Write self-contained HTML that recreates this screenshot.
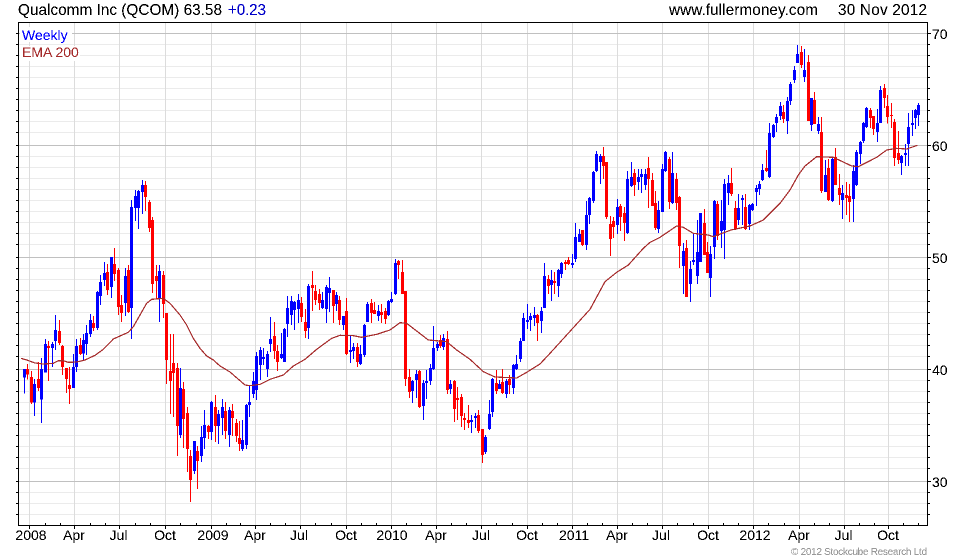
<!DOCTYPE html>
<html><head><meta charset="utf-8"><title>Qualcomm Inc (QCOM)</title>
<style>
html,body{margin:0;padding:0;background:#fff;width:980px;height:560px;overflow:hidden}
svg{display:block}
text{font-family:"Liberation Sans",Arial,sans-serif}
.bw,.bb,.rw,.rb{fill:none;shape-rendering:crispEdges}
.bw{stroke:#0000ff;stroke-width:3}.bb{stroke:#0000ff;stroke-width:9}
.rw{stroke:#ff0000;stroke-width:3}.rb{stroke:#ff0000;stroke-width:9}
.ma{fill:none;stroke:#a52a2a;stroke-width:3.6;shape-rendering:crispEdges}
</style></head><body>
<svg xmlns="http://www.w3.org/2000/svg" width="980" height="560" viewBox="0 0 980 560">
<defs><filter id="al" x="0" y="0" width="100%" height="100%" color-interpolation-filters="sRGB"><feComponentTransfer><feFuncA type="discrete" tableValues="0 0 1 1 1"/></feComponentTransfer></filter></defs>
<rect width="980" height="560" fill="#fff"/>
<!-- minor horizontal grid -->
<path shape-rendering="crispEdges" stroke="#ebebeb" fill="none" d="M19 44.5H927M19 55.5H927M19 66.5H927M19 77.5H927M19 88.5H927M19 99.5H927M19 110.5H927M19 121.5H927M19 132.5H927M19 156.5H927M19 167.5H927M19 178.5H927M19 189.5H927M19 200.5H927M19 211.5H927M19 222.5H927M19 233.5H927M19 244.5H927M19 268.5H927M19 279.5H927M19 290.5H927M19 301.5H927M19 312.5H927M19 323.5H927M19 334.5H927M19 345.5H927M19 356.5H927M19 380.5H927M19 391.5H927M19 402.5H927M19 413.5H927M19 424.5H927M19 435.5H927M19 446.5H927M19 457.5H927M19 468.5H927M19 492.5H927M19 503.5H927M19 514.5H927"/>
<!-- vertical grid -->
<path shape-rendering="crispEdges" stroke="#dcdcdc" fill="none" d="M29.5 23V525M74.5 23V525M119.5 23V525M165.5 23V525M211.5 23V525M255.5 23V525M300.5 23V525M346.5 23V525M391.5 23V525M436.5 23V525M481.5 23V525M527.5 23V525M572.5 23V525M617.5 23V525M662.5 23V525M708.5 23V525M753.5 23V525M799.5 23V525M844.5 23V525M888.5 23V525"/>
<!-- major horizontal grid -->
<path shape-rendering="crispEdges" stroke="#c0c0c0" fill="none" d="M19 33.5H927M19 145.5H927M19 257.5H927M19 369.5H927M19 481.5H927"/>
<!-- legend backing -->
<rect x="20" y="27" width="52" height="15" fill="#fff"/>
<rect x="20" y="46" width="60" height="15" fill="#fff"/>
<!-- ticks -->
<path shape-rendering="crispEdges" stroke="#000" fill="none" d="M16 33.5H19M16 44.5H19M16 55.5H19M16 66.5H19M16 77.5H19M16 88.5H19M16 99.5H19M16 110.5H19M16 121.5H19M16 132.5H19M16 145.5H19M16 156.5H19M16 167.5H19M16 178.5H19M16 189.5H19M16 200.5H19M16 211.5H19M16 222.5H19M16 233.5H19M16 244.5H19M16 257.5H19M16 268.5H19M16 279.5H19M16 290.5H19M16 301.5H19M16 312.5H19M16 323.5H19M16 334.5H19M16 345.5H19M16 356.5H19M16 369.5H19M16 380.5H19M16 391.5H19M16 402.5H19M16 413.5H19M16 424.5H19M16 435.5H19M16 446.5H19M16 457.5H19M16 468.5H19M16 481.5H19M16 492.5H19M16 503.5H19M16 514.5H19
M927 33.5H931M927 44.5H930M927 55.5H930M927 66.5H930M927 77.5H930M927 88.5H930M927 99.5H930M927 110.5H930M927 121.5H930M927 132.5H930M927 145.5H931M927 156.5H930M927 167.5H930M927 178.5H930M927 189.5H930M927 200.5H930M927 211.5H930M927 222.5H930M927 233.5H930M927 244.5H930M927 257.5H931M927 268.5H930M927 279.5H930M927 290.5H930M927 301.5H930M927 312.5H930M927 323.5H930M927 334.5H930M927 345.5H930M927 356.5H930M927 369.5H931M927 380.5H930M927 391.5H930M927 402.5H930M927 413.5H930M927 424.5H930M927 435.5H930M927 446.5H930M927 457.5H930M927 468.5H930M927 481.5H931M927 492.5H930M927 503.5H930M927 514.5H930
M29.5 525V529M74.5 525V529M119.5 525V529M165.5 525V529M211.5 525V529M255.5 525V529M300.5 525V529M346.5 525V529M391.5 525V529M436.5 525V529M481.5 525V529M527.5 525V529M572.5 525V529M617.5 525V529M662.5 525V529M708.5 525V529M753.5 525V529M799.5 525V529M844.5 525V529M888.5 525V529
M45.5 523V525M60.5 523V525M90.5 523V525M105.5 523V525M135.5 523V525M150.5 523V525M180.5 523V525M196.5 523V525M226.5 523V525M240.5 523V525M270.5 523V525M285.5 523V525M315.5 523V525M331.5 523V525M361.5 523V525M376.5 523V525M406.5 523V525M421.5 523V525M451.5 523V525M466.5 523V525M496.5 523V525M512.5 523V525M542.5 523V525M557.5 523V525M587.5 523V525M602.5 523V525M632.5 523V525M647.5 523V525M677.5 523V525M693.5 523V525M723.5 523V525M738.5 523V525M768.5 523V525M784.5 523V525M814.5 523V525M829.5 523V525M859.5 523V525M874.5 523V525M903.5 523V525M918.5 523V525"/>

<!-- candles group 1 -->
<g transform="translate(.1667,170) scale(.33333)">
<path class="bw" d="M73 597V671M103 627V738M124 564V759M136 507V608M157 516V591M166 435V540M220 552V654M229 507V606M250 492V573M259 465V555M271 432V501M292 363V480M301 315V405M313 276V348M334 261V384M376 294V438M394 90V507M406 60V153M415 60V177M427 30V132M478 285V456M541 594V804M583 813V912M604 768V876M613 720V837M634 693V810M655 720V822M667 687V795M688 711V831M727 750V843M739 702V837M748 648V741"/>
<path class="bb" d="M73 597V623M103 642V698M124 597V689M136 522V608M157 522V534M166 480V513M220 591V654M229 528V591M250 510V550M259 489V522M271 450V492M292 366V474M301 336V378M313 309V330M334 261V351M376 318V399M394 111V414M406 78V114M415 63V114M427 45V66M478 303V384M541 654V795M583 813V903M604 801V858M613 765V804M634 696V786M655 732V768M667 711V744M688 720V795M727 810V837M739 705V825M748 696V705"/>
<path class="rw" d="M82 582V628M94 603V702M115 576V663M145 513V633M178 450V525M187 525V615M199 594V669M208 591V702M241 504V555M280 438V483M322 282V375M343 234V333M355 294V435M364 375V456M385 285V429M436 33V123M448 90V186M457 141V369M469 285V387M490 303V444M499 429V642M511 492V732M520 492V741M532 579V858M550 636V834M562 711V906M571 840V996M592 828V957M625 765V807M646 675V816M676 696V807M697 702V798M709 747V816M718 753V843"/>
<path class="rb" d="M82 597V614M94 621V698M115 627V654M145 528V534M178 483V519M187 528V591M199 594V627M208 645V657M241 525V552M280 459V474M322 306V360M343 282V312M355 300V411M364 405V429M385 300V426M436 45V81M448 96V174M457 150V342M469 318V333M490 315V402M499 429V570M511 603V633M520 579V609M532 594V768M550 657V747M562 729V837M571 858V930M592 843V873M625 768V786M646 711V768M676 723V783M697 723V744M709 759V798M718 804V822"/>
</g>
<!-- candles group 2 -->
<g transform="translate(250.1667,240) scale(.33333)">
<path class="bw" d="M10 396V474M19 336V480M31 321V420M40 324V375M52 333V411M61 231V336M94 279V357M103 264V366M112 168V291M124 168V255M133 183V270M145 162V249M175 132V297M217 156V207M229 135V249M238 111V216M259 156V213M280 228V270M301 285V369M310 309V357M331 315V375M343 252V351M352 186V246M385 195V243M415 180V228M424 156V189M436 57V165M487 420V489M499 390V474M520 420V540M529 390V477M541 372V435M550 258V390M562 306V333M580 282V330M601 420V462M664 525V579M676 519V564M706 585V642M718 480V570M727 414V531M748 420V447M769 417V474M790 372V462M799 345V390M811 294V366M820 219V303M832 192V267M841 219V273M853 201V258M874 201V279M883 69V204"/>
<path class="bb" d="M10 423V462M19 348V450M31 330V375M40 351V357M52 342V387M61 297V312M94 342V354M103 267V366M112 204V252M124 183V225M133 186V210M145 180V207M175 138V264M217 180V204M229 141V207M238 144V159M259 165V192M280 228V255M301 330V336M310 321V333M331 342V372M343 255V345M352 192V246M385 213V228M415 183V225M424 177V186M436 69V162M487 423V453M499 402V420M520 429V498M529 423V429M541 384V423M550 324V387M562 312V324M580 294V321M601 432V447M664 540V546M676 528V534M706 591V636M718 522V567M727 417V516M748 432V447M769 423V462M790 375V444M799 372V387M811 303V357M820 234V303M832 240V246M841 228V240M853 225V234M874 213V243M883 108V204"/>
<path class="rw" d="M73 246V357M82 315V393M154 171V246M166 207V294M187 93V213M196 135V195M208 147V210M250 150V249M268 168V255M289 174V345M322 309V381M364 177V249M373 186V216M394 192V249M406 204V252M445 60V117M457 60V162M466 153V438M478 387V474M508 390V504M571 285V324M592 273V462M613 420V546M622 441V540M634 462V561M643 519V570M655 495V564M685 510V579M697 567V669M739 390V462M757 387V462M778 405V462M862 222V303M895 105V162"/>
<path class="rb" d="M73 288V333M82 333V366M154 189V231M166 246V273M187 135V144M196 153V180M208 162V189M250 150V198M268 180V240M289 213V342M322 321V366M364 189V219M373 210V222M394 216V225M406 213V237M445 63V75M457 96V162M466 153V417M478 411V456M508 393V501M571 300V318M592 297V450M613 423V507M622 474V480M634 471V528M643 534V540M655 540V549M685 525V573M697 567V645M739 429V453M757 426V459M778 417V435M862 225V249M895 117V138"/>
</g>
<!-- candles group 3 -->
<g transform="translate(500.1667,140) scale(.33333)">
<path class="bw" d="M154 390V483M175 387V471M184 366V414M217 342V384M226 249V366M238 267V306M259 183V330M268 171V252M280 93V189M289 33V96M301 42V132M352 177V282M382 93V282M394 66V141M415 87V150M424 87V159M436 87V150M475 183V279M487 72V216M496 33V96M517 36V192M550 309V462M571 363V486M580 282V375M592 240V432M601 219V366M631 318V471M643 180V357M664 180V324M673 117V357M685 105V195"/>
<path class="bb" d="M154 420V435M175 390V438M184 369V402M217 369V375M226 291V357M238 282V306M259 225V315M268 174V225M280 96V183M289 42V93M301 48V66M352 201V255M382 117V279M394 111V138M415 111V126M424 102V111M436 102V135M475 210V267M487 87V216M496 36V93M517 99V189M550 333V378M571 387V432M580 360V366M592 336V408M601 219V366M631 342V414M643 183V321M664 243V273M673 132V270M685 129V159"/>
<path class="rw" d="M163 396V462M196 360V390M205 351V375M247 270V318M310 21V117M319 66V237M331 228V348M340 231V294M361 192V273M373 201V303M403 87V168M445 51V204M457 99V198M466 153V270M508 51V207M529 99V210M538 168V384M559 300V471M613 207V345M622 306V399M652 183V300"/>
<path class="rb" d="M163 423V429M196 366V372M205 360V372M247 270V315M310 48V78M319 66V231M331 252V297M340 243V261M361 198V231M373 219V249M403 99V135M445 84V117M457 120V198M466 189V264M508 57V186M529 117V189M538 171V318M559 324V471M613 249V345M622 336V399M652 192V288"/>
</g>
<!-- candles group 4 -->
<g transform="translate(720.1667,40) scale(.33333)">
<path class="bw" d="M55 462V555M67 465V555M88 492V570M97 489V513M109 435V498M118 423V465M127 372V423M148 249V414M160 252V294M169 222V276M181 186V240M202 171V282M211 126V195M223 78V129M232 15V69M253 27V126M274 174V273M295 231V282M316 360V456M337 354V486M367 435V537M400 375V546M409 330V438M421 303V372M430 246V309M439 201V264M472 207V306M481 138V249M544 345V405M556 312V378M565 219V378M577 210V288M586 207V267M595 189V258"/>
<path class="bb" d="M55 504V540M67 474V480M88 495V552M97 492V510M109 444V456M118 432V447M127 390V420M148 279V411M160 255V291M169 231V249M181 198V228M202 183V243M211 132V183M223 90V120M232 42V69M253 90V111M274 174V255M295 252V273M316 405V456M337 357V483M367 459V480M400 393V477M409 336V435M421 306V342M430 249V303M439 204V261M472 249V276M481 150V249M544 348V369M556 339V345M565 261V312M577 249V255M586 210V234M595 195V225"/>
<path class="rw" d="M34 384V468M46 483V570M76 462V570M139 330V396M190 195V249M244 18V84M265 45V243M283 156V252M304 231V459M325 357V483M346 324V435M358 402V495M379 426V525M388 432V546M451 204V264M460 228V285M493 132V204M502 165V250M514 189V264M523 237V378M535 273V372"/>
<path class="rb" d="M34 429V462M46 504V567M76 501V567M139 384V393M190 216V237M244 36V75M265 66V243M283 180V252M304 276V453M325 384V480M346 351V435M358 444V465M379 465V474M388 468V486M451 210V234M460 228V267M493 144V174M502 198V231M514 225V228M523 246V354M535 339V360"/>
</g>

<!-- EMA 200 -->
<g transform="translate(0,170) scale(.33333)"><path class="ma" d="M63 565L80 570L105 579L130 582L160 580L175 572L190 572L205 577L230 576L255 570L285 556L310 538L340 507L360 498L385 487L400 470L420 435L440 400L455 388L490 385L510 400L540 435L560 465L580 505L600 535L620 558L640 570L660 588L690 606L720 632L735 645L750 647"/></g>
<g transform="translate(250,240) scale(.33333)"><path class="ma" d="M0 437L30 433L60 418L100 405L130 378L165 358L200 328L245 295L270 286L310 287L335 292L380 283L420 270L450 248L470 250L500 273L535 300L590 305L620 330L660 358L700 395L735 411L800 414L830 397L870 372L900 340"/></g>
<g transform="translate(500,140) scale(.33333)"><path class="ma" d="M150 640L270 508L295 462L315 425L350 397L385 375L430 325L450 307L480 292L530 258L550 262L580 280L625 285L640 290L693 270"/></g>
<g transform="translate(720,40) scale(.33333)"><path class="ma" d="M33 570L90 558L130 540L180 490L210 450L235 405L255 378L290 350L340 352L395 378L415 380L470 352L500 330L530 325L560 327L592 316"/></g>

<!-- frame -->
<rect x="18.5" y="22.5" width="909" height="503" fill="none" stroke="#000" shape-rendering="crispEdges"/>

<g filter="url(#al)">
<!-- header -->
<text x="18" y="15" font-size="15.33" fill="#000" textLength="204" lengthAdjust="spacing">Qualcomm Inc (QCOM) 63.58</text>
<text x="228" y="15" font-size="15.33" fill="#0000c8" textLength="38" lengthAdjust="spacing">+0.23</text>
<text x="669" y="15" font-size="15.33" fill="#000" textLength="149" lengthAdjust="spacing">www.fullermoney.com</text>
<text x="838" y="15" font-size="15.33" fill="#000" textLength="89" lengthAdjust="spacing">30 Nov 2012</text>
<!-- legend -->
<text x="22" y="40" font-size="14" fill="#0000ff">Weekly</text>
<text x="22" y="57" font-size="14" fill="#a52a2a">EMA 200</text>
<!-- y labels -->
<g font-size="14" fill="#000">
<text x="932" y="39">70</text><text x="932" y="151">60</text><text x="932" y="263">50</text><text x="932" y="375">40</text><text x="932" y="487">30</text>
</g>
<!-- x labels -->
<g font-size="14" fill="#000" text-anchor="middle">
<text x="31" y="540">2008</text><text x="74" y="540">Apr</text><text x="118.5" y="540">Jul</text><text x="165" y="540">Oct</text><text x="213" y="540">2009</text><text x="255" y="540">Apr</text><text x="299" y="540">Jul</text><text x="346" y="540">Oct</text><text x="392" y="540">2010</text><text x="436" y="540">Apr</text><text x="481" y="540">Jul</text><text x="527" y="540">Oct</text><text x="574" y="540">2011</text><text x="617" y="540">Apr</text><text x="661" y="540">Jul</text><text x="708" y="540">Oct</text><text x="755" y="540">2012</text><text x="799" y="540">Apr</text><text x="843.5" y="540">Jul</text><text x="888" y="540">Oct</text>
</g>
<text x="791" y="555" font-size="10" fill="#999" textLength="136" lengthAdjust="spacing">© 2012 Stockcube Research Ltd</text>
</g>
</svg>
</body></html>
